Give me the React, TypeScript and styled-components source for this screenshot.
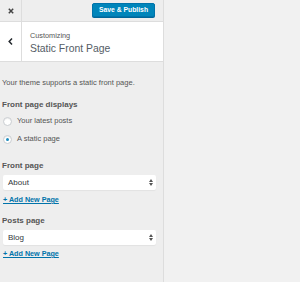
import React from "react"
import styled, { createGlobalStyle } from "styled-components"

const GlobalStyle = createGlobalStyle`
  html, body {
    margin: 0;
    padding: 0;
    background: #f1f1f1;
    font-family: "Liberation Sans", Arial, sans-serif;
  }
  * { box-sizing: border-box; }
`

const Sidebar = styled.div`
  width: 164px;
  height: 282px;
  background: #eee;
  border-right: 1px solid #ddd;
  display: flex;
  flex-direction: column;
`

const TopBar = styled.div`
  height: 22px;
  display: flex;
  align-items: center;
  justify-content: space-between;
  border-bottom: 1px solid #ddd;
  padding-right: 8px;
`

const CloseBox = styled.div`
  width: 22px;
  height: 22px;
  border-right: 1px solid #ddd;
  display: flex;
  align-items: center;
  justify-content: center;
  color: #444;
`

const PublishButton = styled.button`
  height: 14px;
  width: 63px;
  padding: 0;
  border: 1px solid #0073aa;
  border-radius: 2px;
  background: #0085ba;
  box-shadow: 0 1px 0 #006799;
  color: #fff;
  font-family: "Liberation Sans", Arial, sans-serif;
  font-size: 6.8px;
  font-weight: 700;
  line-height: 12px;
  margin-top: -2px;
`

const TitleSection = styled.div`
  height: 40px;
  display: flex;
  background: #fff;
  border-bottom: 1px solid #ddd;
`

const BackBox = styled.div`
  width: 22px;
  border-right: 1px solid #ddd;
  display: flex;
  align-items: center;
  justify-content: center;
  color: #23282d;
`

const TitleText = styled.div`
  padding: 9px 0 0 8px;
  display: flex;
  flex-direction: column;
`

const Small = styled.span`
  font-size: 7.3px;
  color: #555;
  line-height: 9px;
`

const Big = styled.span`
  font-size: 10.4px;
  color: #555d66;
  line-height: 14px;
  margin-top: 2px;
`

const Content = styled.div`
  padding: 16px 7px 0 2px;
  display: flex;
  flex-direction: column;
`

const Description = styled.p`
  margin: 0;
  font-size: 7.5px;
  line-height: 10px;
  color: #555;
`

const ControlTitle = styled.div<{ $top: number }>`
  margin-top: ${p => p.$top}px;
  font-size: 8px;
  font-weight: 700;
  color: #555;
  line-height: 11px;
`

const RadioRow = styled.label<{ $top: number }>`
  display: flex;
  align-items: center;
  gap: 5px;
  margin-top: ${p => p.$top}px;
  font-size: 7.5px;
  color: #555;
  line-height: 10px;
`

const RadioCircle = styled.span<{ $checked?: boolean }>`
  width: 9px;
  height: 9px;
  border-radius: 50%;
  border: 1px solid #c9cdd1;
  background: #fff;
  box-shadow: inset 0 1px 1px rgba(0, 0, 0, 0.08);
  display: flex;
  align-items: center;
  justify-content: center;
  margin-left: 1px;
  &::after {
    content: "";
    display: ${p => (p.$checked ? "block" : "none")};
    width: 3px;
    height: 3px;
    border-radius: 50%;
    background: #1e8cbe;
  }
`

const SelectBox = styled.div<{ $top: number }>`
  margin: ${p => p.$top}px 0 0 1px;
  height: 15px;
  background: #fff;
  border-radius: 2px;
  box-shadow: 0 1px 1px rgba(0, 0, 0, 0.05);
  display: flex;
  align-items: center;
  justify-content: space-between;
  padding: 0 3px 0 5px;
  font-size: 8px;
  color: #32373c;
`

const AddLink = styled.a<{ $top: number }>`
  margin-top: ${p => p.$top}px;
  font-size: 7.2px;
  font-weight: 700;
  color: #0073aa;
  text-decoration: underline;
  line-height: 10px;
  align-self: flex-start;
  margin-left: 1px;
`

const Arrows = () => (
  <svg width="4" height="7" viewBox="0 0 4 7">
    <path d="M0 3 L2 0 L4 3 Z M0 4 L2 7 L4 4 Z" fill="#555" />
  </svg>
)

export default function App() {
  return (
    <>
      <GlobalStyle />
      <Sidebar>
        <TopBar>
          <CloseBox>
            <svg width="6" height="6" viewBox="0 0 6 6">
              <path d="M0.8 0.8 L5.2 5.2 M5.2 0.8 L0.8 5.2" stroke="#444" strokeWidth="1.5" />
            </svg>
          </CloseBox>
          <PublishButton>Save &amp; Publish</PublishButton>
        </TopBar>
        <TitleSection>
          <BackBox>
            <svg width="5" height="7" viewBox="0 0 5 7">
              <path d="M4 0.6 L1.2 3.5 L4 6.4" stroke="#23282d" strokeWidth="1.5" fill="none" />
            </svg>
          </BackBox>
          <TitleText>
            <Small>Customizing</Small>
            <Big>Static Front Page</Big>
          </TitleText>
        </TitleSection>
        <Content>
          <Description>Your theme supports a static front page.</Description>
          <ControlTitle $top={11}>Front page displays</ControlTitle>
          <RadioRow $top={6}>
            <RadioCircle />
            Your latest posts
          </RadioRow>
          <RadioRow $top={8}>
            <RadioCircle $checked />
            A static page
          </RadioRow>
          <ControlTitle $top={16}>Front page</ControlTitle>
          <SelectBox $top={4}>
            About
            <Arrows />
          </SelectBox>
          <AddLink $top={5}>+ Add New Page</AddLink>
          <ControlTitle $top={10}>Posts page</ControlTitle>
          <SelectBox $top={4}>
            Blog
            <Arrows />
          </SelectBox>
          <AddLink $top={4}>+ Add New Page</AddLink>
        </Content>
      </Sidebar>
    </>
  )
}
